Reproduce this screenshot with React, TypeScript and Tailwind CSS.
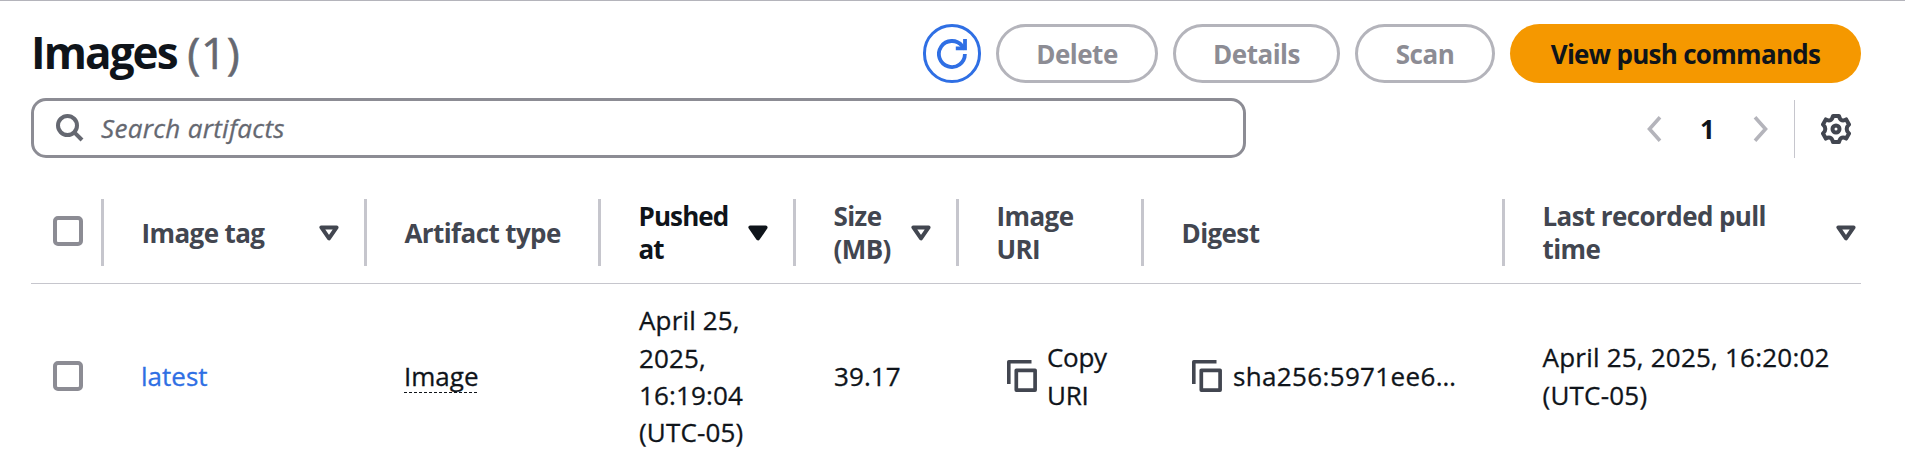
import type { ReactNode } from "react";

function SortIcon({ filled = false, className = "" }: { filled?: boolean; className?: string }) {
  return (
    <svg viewBox="0 0 20 16" className={"h-4 w-5 shrink-0 " + className} strokeWidth="4" strokeLinejoin="round" stroke="currentColor" fill={filled ? "currentColor" : "none"}>
      <path d="M2.4 2.4h15.2L10 13.4z" />
    </svg>
  );
}

function CopyIcon() {
  return (
    <svg viewBox="0 0 30 32" className="h-8 w-[30px] shrink-0 text-[#424650]" fill="none" stroke="currentColor" strokeLinejoin="round">
      <path d="M1.8 24V1.8H24.5" strokeWidth="3.6" />
      <rect x="9.3" y="10.3" width="18.8" height="19.8" strokeWidth="3.7" />
    </svg>
  );
}

function Checkbox() {
  return <span role="checkbox" aria-checked="false" className="block size-[30px] rounded-[5px] border-4 border-[#8c8c94]" />;
}

function HeadCell({ children, icon, last }: { children: ReactNode; icon?: ReactNode; last?: boolean }) {
  return (
    <div className={"flex h-[67px] items-center justify-between leading-[33px] text-[#424650] " + (last ? "pr-[5px]" : "border-r-3 border-[#c6c6cd] pr-[25px]")}>
      <span className="pt-px pl-[37.5px]">{children}</span>
      {icon}
    </div>
  );
}

function GhostButton({ children, className }: { children: ReactNode; className: string }) {
  return (
    <button className={"h-[59px] rounded-full border-3 border-[#b4b4bb] pt-px font-bold tracking-[-0.5px] text-[#8c8c94] " + className}>{children}</button>
  );
}

const columns = "grid grid-cols-[73px_263px_234px_195px_163px_185px_361px_356px] items-center";

export default function App() {
  return (
    <div className="h-[463px] overflow-hidden border-t border-[#b4b4bb] bg-white px-[31px] font-['Open_Sans',sans-serif] text-[26px] text-[#0f141a]">
      <header className="flex h-[97px] items-start justify-between pt-[23px] pr-[13px]">
        <h1 className="text-[44px] leading-[57px] font-bold tracking-[-1.9px]">
          Images <span className="ml-px font-normal tracking-[0.7px] text-[#656871] [-webkit-text-stroke:0.6px]">(1)</span>
        </h1>
        <div className="flex gap-[15px]">
          <button aria-label="Refresh" className="flex h-[59px] w-[58px] items-center justify-center rounded-full border-3 border-[#2f6fe4] text-[#2f6fe4]">
            <svg viewBox="0 0 30 30" className="size-[30px]" fill="none" stroke="currentColor" strokeWidth="3.8">
              <path d="M27.9 15A13 13 0 1 1 25 6.8L28 10" />
              <path d="M28 0V9.4H18.8" />
            </svg>
          </button>
          <GhostButton className="w-[162px]">Delete</GhostButton>
          <GhostButton className="w-[167px]">Details</GhostButton>
          <GhostButton className="w-[140px]">Scan</GhostButton>
          <button className="h-[59px] w-[351px] rounded-full bg-[#f59800] pt-px font-bold tracking-[-0.7px]">View push commands</button>
        </div>
      </header>

      <div className="flex h-[60px] items-center">
        <label className="flex h-[60px] w-[1215px] items-center rounded-[15px] border-3 border-[#8c8c94] pl-[22px] text-[#656871]">
          <svg viewBox="0 0 28 28" className="size-7" fill="none" stroke="currentColor" strokeWidth="4">
            <circle cx="11.5" cy="11.5" r="9.5" />
            <path d="M18.3 18.3l7.7 7.7" />
          </svg>
          <span className="ml-[17px] tracking-[0.3px] italic [-webkit-text-stroke:0.3px]">Search artifacts</span>
        </label>
        <nav className="mt-[2px] ml-[401px] flex items-center">
          <svg viewBox="0 0 15 26" className="h-[26px] w-[15px]" fill="none" stroke="#b4b4bb" strokeWidth="3.6">
            <path d="M13 1.3L2.5 13 13 24.7" />
          </svg>
          <span className="w-[91px] text-center font-bold">1</span>
          <svg viewBox="0 0 15 26" className="h-[26px] w-[15px]" fill="none" stroke="#b4b4bb" strokeWidth="3.6">
            <path d="M2 1.3L12.5 13 2 24.7" />
          </svg>
        </nav>
        <div className="mt-[2px] ml-[26px] h-[58px] w-px bg-[#c6c6cd]" />
        <svg viewBox="0 0 30 30" className="mt-[2px] ml-[26px] size-[30px] text-[#424650]" fill="none" stroke="currentColor" strokeWidth="4" strokeLinejoin="round">
          <path d="M12 2h6q.8 3.6 3 4.300q2.200.4 4.200-.9l2.800 5q-2.300 2-2.300 4.600t2.300 4.600l-2.800 5q-2-1.300-4.200-.9q-2.200.7-3 4.300h-6q-.8-3.600-3-4.300q-2.200-.4-4.200.9l-2.800-5q2.300-2 2.300-4.600t-2.300-4.600l2.800-5q2 1.300 4.200.9q2.200-.7 3-4.300z" />
          <circle cx="15" cy="15" r="3.5" />
        </svg>
      </div>

      <section className="w-[1830px]">
        <div className={columns + " h-[126px] border-b border-[#c6c6cd] pt-[24px] font-bold tracking-[-0.6px]"}>
          <div className="flex h-[67px] items-center border-r-3 border-[#c6c6cd] pb-[3px] pl-[22px]"><Checkbox /></div>
          <HeadCell icon={<SortIcon />}>Image tag</HeadCell>
          <HeadCell>Artifact type</HeadCell>
          <HeadCell icon={<SortIcon filled className="text-[#0f141a]" />}><span className="tracking-[-0.9px] text-[#0f141a]">Pushed<br />at</span></HeadCell>
          <HeadCell icon={<SortIcon />}>Size<br />(MB)</HeadCell>
          <HeadCell>Image<br />URI</HeadCell>
          <HeadCell>Digest</HeadCell>
          <HeadCell last icon={<SortIcon />}>Last recorded pull<br />time</HeadCell>
        </div>
        <div className={columns + " h-[184px] leading-[37.4px] [-webkit-text-stroke:0.3px]"}>
          <div className="pl-[22px]"><Checkbox /></div>
          <a className="pt-[2px] pl-[37px] text-[#2f6fe4]">latest</a>
          <div className="flex pt-[1px] pl-[37px]">
            <span className="bg-[repeating-linear-gradient(90deg,#0f141a_0_3px,transparent_3px_5px)] bg-[length:100%_1px] bg-[position:0_34px] bg-no-repeat">Image</span>
          </div>
          <div className="pt-[2px] pl-[38px] tracking-[0.15px]">April 25,<br />2025,<br />16:19:04<br />(UTC-05)</div>
          <div className="pt-[2px] pl-[38px] tracking-[0.1px]">39.17</div>
          <div className="flex items-center gap-[10px] pl-[48px]"><CopyIcon /><span className="pt-[1px] tracking-[-0.3px]">Copy<br />URI</span></div>
          <div className="flex items-center gap-[11px] pl-[48px]"><CopyIcon /><span className="pt-[2px] tracking-[0.35px]">sha256:5971ee6…</span></div>
          <div className="pt-[1px] pl-[37.5px] tracking-[0.22px]">April 25, 2025, 16:20:02<br />(UTC-05)</div>
        </div>
      </section>
    </div>
  );
}
